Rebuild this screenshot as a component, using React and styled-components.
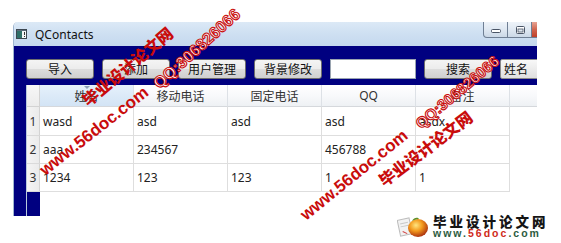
import React from 'react';
import styled, { createGlobalStyle } from 'styled-components';

const GlobalStyle = createGlobalStyle`
  html, body {
    margin: 0;
    padding: 0;
    background: #ffffff;
    overflow: hidden;
  }
  * {
    box-sizing: border-box;
  }
`;

const UI_FONT = `"Noto Sans", "Noto Sans CJK SC", sans-serif`;

const Page = styled.div`
  position: relative;
  width: 561px;
  height: 243px;
  padding: 22px 0 0 13px;
  font-family: ${UI_FONT};
`;

const Window = styled.div`
  width: 524px;
  height: 194px;
  display: flex;
  flex-direction: column;
  overflow: hidden;
  border-left: 1px solid #9fb6d0;
  border-top-left-radius: 5px;
`;

const TitleBar = styled.div`
  height: 24px;
  flex-shrink: 0;
  display: flex;
  align-items: center;
  padding-left: 2px;
  background: linear-gradient(180deg, #dce9f6 0%, #cfe0f2 45%, #c4d8ee 100%);
`;

const Title = styled.span`
  flex: 1;
  margin-left: 8px;
  font-size: 12px;
  color: #111;
`;

const CaptionGroup = styled.div`
  align-self: flex-start;
  width: 54px;
  height: 16px;
  display: flex;
  flex-shrink: 0;
  overflow: hidden;
`;

const CaptionButton = styled.div`
  width: ${p => (p.$close ? 43 : 25)}px;
  height: 16px;
  flex-shrink: 0;
  display: flex;
  align-items: center;
  justify-content: center;
  border: 1px solid #6f7f94;
  border-top: none;
  margin-left: -1px;
  background: ${p =>
    p.$close
      ? 'linear-gradient(180deg, #e8a493 0%, #d0654f 50%, #c0412b 100%)'
      : 'linear-gradient(180deg, #eef3f9 0%, #dfe8f2 50%, #cbd8e7 100%)'};
  &:first-child {
    border-bottom-left-radius: 4px;
    margin-left: 0;
  }
`;

const Body = styled.div`
  flex: 1;
  display: flex;
  flex-direction: column;
  gap: 6px;
  padding: 13px 0 0 12px;
  background: #000080;
  min-height: 0;
`;

const Toolbar = styled.div`
  display: flex;
  gap: 8px;
  height: 20px;
  flex-shrink: 0;
`;

const ToolButton = styled.div`
  width: 68px;
  height: 20px;
  flex-shrink: 0;
  display: flex;
  align-items: center;
  justify-content: center;
  border: 1px solid #6e6e6e;
  border-radius: 3px;
  background: linear-gradient(180deg, #f4f4f4 0%, #ececec 48%, #dcdcdc 52%, #cfcfcf 100%);
  font-size: 12px;
  color: #111;
`;

const SearchInput = styled.div`
  width: 86px;
  height: 20px;
  flex-shrink: 0;
  background: #ffffff;
  border: 1px solid #9aa4b0;
`;

const Combo = styled.div`
  width: 80px;
  height: 20px;
  flex-shrink: 0;
  display: flex;
  align-items: center;
  padding-left: 3px;
  border: 1px solid #8a8a8a;
  border-radius: 2px;
  background: linear-gradient(180deg, #f8f8f8 0%, #ececec 50%, #dfdfdf 100%);
  font-size: 12px;
  color: #111;
`;

const Table = styled.div`
  flex: 1;
  display: grid;
  grid-template-columns: 13px repeat(5, 94px) 1fr;
  grid-template-rows: 22px 29px 28px 28px 1fr;
  background: #ffffff;
  border-left: 1px solid #b8c9dc;
  font-size: 12px;
  color: #222;
`;

const Corner = styled.div`
  background: linear-gradient(180deg, #f7f7f7, #ececec);
  border-right: 1px solid #d3d3d3;
  border-bottom: 1px solid #d3d3d3;
`;

const HeaderCell = styled.div`
  position: relative;
  display: flex;
  align-items: center;
  justify-content: center;
  border-right: ${p => (p.$filler ? 'none' : '1px solid #dde1e6')};
  border-bottom: 1px solid #d5d8dc;
  background: ${p =>
    p.$sorted
      ? 'linear-gradient(180deg, #e6f1fb 0%, #dceaf8 50%, #d3e4f5 100%)'
      : 'linear-gradient(180deg, #ffffff 0%, #f8f9fb 50%, #eef1f4 100%)'};
  color: #333;

  ${p =>
    p.$sorted &&
    `&::before {
      content: '';
      position: absolute;
      top: 1px;
      left: 50%;
      margin-left: -3px;
      border-left: 3px solid transparent;
      border-right: 3px solid transparent;
      border-top: 3px solid #8aa0b8;
    }`}
`;

const RowHeader = styled.div`
  display: flex;
  align-items: center;
  justify-content: center;
  background: linear-gradient(90deg, #f4f4f4, #ebebeb);
  border-right: 1px solid #d3d3d3;
  border-bottom: 1px solid #dadada;
  color: #333;
`;

const Cell = styled.div`
  display: flex;
  align-items: center;
  padding-left: 3px;
  border-right: 1px solid #dedede;
  border-bottom: 1px solid #dedede;
  white-space: nowrap;
  overflow: hidden;
`;

const Blank = styled.div`
  background: ${p => (p.$navy ? '#000080' : 'transparent')};
`;

const Overlay = styled.div`
  position: absolute;
  inset: 0;
  pointer-events: none;
`;

const Mark = styled.span`
  position: absolute;
  left: ${p => p.$x}px;
  top: ${p => p.$y}px;
  transform: translate(-50%, -50%) rotate(${p => p.$angle}deg);
  white-space: nowrap;
  line-height: 1;
  color: ${p => (p.$outline ? '#ffffff' : '#c90c0c')};
  -webkit-text-stroke: ${p => (p.$outline ? '1.1px #c90c0c' : '0')};
  font-family: ${p =>
    p.$cjk ? `"Noto Sans CJK SC", sans-serif` : `"Liberation Sans", Arial, sans-serif`};
  font-size: ${p => p.$size}px;
  font-weight: ${p => (p.$cjk ? 900 : 700)};
`;

const Logo = styled.div`
  position: absolute;
  left: 397px;
  top: 214px;
  display: flex;
  align-items: center;
  gap: 3px;
`;

const LogoText = styled.div`
  display: flex;
  flex-direction: column;
  gap: 1px;
`;

const LogoTitle = styled.span`
  display: block;
  height: 14px;
  font-family: "Noto Sans CJK SC", sans-serif;
  font-weight: 900;
  font-size: 13.5px;
  line-height: 14px;
  letter-spacing: 3px;
  color: #151515;
`;

const LogoUrl = styled.span`
  display: block;
  height: 9px;
  font-family: "Liberation Sans", Arial, sans-serif;
  font-weight: 700;
  font-size: 10.5px;
  line-height: 9px;
  letter-spacing: 2px;
  color: #2c5b3e;

  b {
    color: #d02a1a;
  }
`;

const AppIcon = () => (
  <svg width="11" height="10" viewBox="0 0 11 10">
    <rect x="0.5" y="0.5" width="10" height="9" fill="#f4f6f8" stroke="#3c4650" />
    <rect x="1" y="2" width="5" height="7" fill="#2f6f68" />
    <rect x="1" y="1" width="9" height="1" fill="#5b6b7a" />
    <rect x="8" y="3" width="1" height="3" fill="#333" />
    <rect x="8" y="7" width="1" height="1" fill="#333" />
  </svg>
);

const MinIcon = () => (
  <svg width="12" height="8" viewBox="0 0 12 8">
    <rect x="1.5" y="3.5" width="9" height="3" rx="1" fill="#ffffff" stroke="#4a5566" />
  </svg>
);

const MaxIcon = () => (
  <svg width="12" height="10" viewBox="0 0 12 10">
    <rect x="2.5" y="1.5" width="8" height="7" rx="1" fill="#ffffff" stroke="#4a5566" />
    <rect x="4" y="4" width="5" height="3" fill="#dfe6ee" stroke="#4a5566" strokeWidth="0.8" />
  </svg>
);

const BallIcon = () => (
  <svg width="33" height="24" viewBox="0 0 33 24">
    <defs>
      <radialGradient id="ball" cx="0.4" cy="0.35" r="0.7">
        <stop offset="0" stopColor="#ffe680" />
        <stop offset="0.45" stopColor="#f39a1e" />
        <stop offset="1" stopColor="#a3260c" />
      </radialGradient>
    </defs>
    <g transform="rotate(-12 8 14)">
      <rect x="2" y="5" width="12" height="16" fill="#f2f2f2" stroke="#bcbcbc" />
      <line x1="4" y1="9" x2="12" y2="9" stroke="#c8c8c8" />
      <line x1="4" y1="12" x2="12" y2="12" stroke="#c8c8c8" />
      <line x1="5" y1="17" x2="9" y2="20" stroke="#d04040" />
    </g>
    <ellipse cx="21" cy="14" rx="10" ry="9" fill="url(#ball)" />
    <path d="M15 7 C17 3, 21 3, 22 5 C19 5, 17 6, 15 7 Z" fill="#5e8f2a" />
  </svg>
);

const columns = ['姓名', '移动电话', '固定电话', 'QQ', '备注'];

const rows = [
  ['wasd', 'asd', 'asd', 'asd', 'asdx'],
  ['aaa', '234567', '', '456788', ''],
  ['1234', '123', '123', '1', '1'],
];

const marks = [
  { text: '毕业设计论文网', x: 127, y: 66, angle: -40, size: 16, cjk: true },
  { text: 'QQ:306826066', x: 197, y: 49, angle: -42, size: 16, outline: true },
  { text: 'www.56doc.com', x: 94, y: 131, angle: -38, size: 17 },
  { text: 'QQ:306826066', x: 457, y: 92, angle: -40, size: 15, outline: true },
  { text: '毕业设计论文网', x: 425, y: 148, angle: -37, size: 16, cjk: true },
  { text: 'www.56doc.com', x: 354, y: 175, angle: -39, size: 17 },
];

const App = () => {
  return (
    <Page>
      <GlobalStyle />
      <Window>
        <TitleBar>
          <AppIcon />
          <Title>QContacts</Title>
          <CaptionGroup>
            <CaptionButton>
              <MinIcon />
            </CaptionButton>
            <CaptionButton>
              <MaxIcon />
            </CaptionButton>
            <CaptionButton $close />
          </CaptionGroup>
        </TitleBar>

        <Body>
          <Toolbar>
            <ToolButton>导入</ToolButton>
            <ToolButton>添加</ToolButton>
            <ToolButton>用户管理</ToolButton>
            <ToolButton>背景修改</ToolButton>
            <SearchInput />
            <ToolButton>搜索</ToolButton>
            <Combo>姓名</Combo>
          </Toolbar>

          <Table>
            <Corner />
            {columns.map((col, i) => (
              <HeaderCell key={col} $sorted={i === 0}>
                {col}
              </HeaderCell>
            ))}
            <HeaderCell $filler />

            {rows.map((row, r) => (
              <React.Fragment key={r}>
                <RowHeader>{r + 1}</RowHeader>
                {row.map((value, c) => (
                  <Cell key={c}>{value}</Cell>
                ))}
                <Blank />
              </React.Fragment>
            ))}

            <Blank $navy />
          </Table>
        </Body>
      </Window>

      <Overlay>
        {marks.map((m, i) => (
          <Mark
            key={i}
            $x={m.x}
            $y={m.y}
            $angle={m.angle}
            $size={m.size}
            $cjk={m.cjk}
            $outline={m.outline}
          >
            {m.text}
          </Mark>
        ))}
        <Logo>
          <BallIcon />
          <LogoText>
            <LogoTitle>毕业设计论文网</LogoTitle>
            <LogoUrl>
              www.<b>56doc</b>.com
            </LogoUrl>
          </LogoText>
        </Logo>
      </Overlay>
    </Page>
  );
};

export default App;
